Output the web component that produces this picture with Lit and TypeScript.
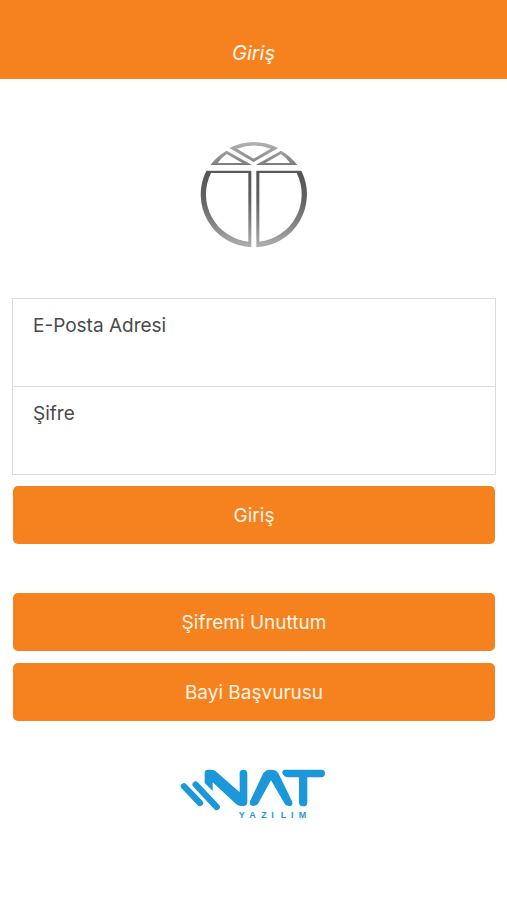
import { LitElement, html, css } from "lit";
import { customElement } from "lit/decorators.js";

@customElement("app-root")
export class AppRoot extends LitElement {
  static styles = css`
    :host {
      display: block;
      min-height: 100vh;
      background: #fff;
      color: #4a4a4a;
      font-family: Inter, "Noto Sans", sans-serif;
      font-size: 19px;
      line-height: 24px;
    }
    .bar {
      box-sizing: border-box;
      height: 79px;
      padding-top: 41px;
      background: #f6821f;
      color: #fff8ee;
      text-align: center;
    }
    .title {
      margin: 0;
      font-size: 20px;
      font-weight: 400;
      font-style: italic;
    }
    .content {
      display: flex;
      flex-direction: column;
      align-items: center;
      padding: 51px 11px 24px 12px;
    }
    svg {
      display: block;
    }
    .form {
      width: 100%;
      margin-top: 38px;
    }
    .fields {
      border: 1px solid #dcdcdc;
    }
    .field {
      display: flex;
      flex-direction: column;
      height: 87px;
      box-sizing: border-box;
      padding: 15px 20px 8px;
    }
    .field + .field {
      border-top: 1px solid #dcdcdc;
      height: 88px;
    }
    .input {
      flex: 1;
      min-height: 0;
      width: 100%;
      padding: 0;
      border: 0;
      outline: 0;
      background: none;
      color: inherit;
      font: inherit;
    }
    .actions {
      display: flex;
      flex-direction: column;
      gap: 12px;
      padding: 11px 1px 0;
    }
    .button {
      width: 100%;
      height: 58px;
      padding: 2px 0 0;
      border: 0;
      border-radius: 5px;
      background: #f6821f;
      color: #fff4e4;
      font: inherit;
      cursor: pointer;
    }
    .secondary {
      margin-top: 37px;
    }
    .vendor {
      margin-top: 34px;
    }
    .vendor-name {
      font: bold 27px "Liberation Sans", sans-serif;
    }
  `;

  render() {
    return html`
      <header class="bar"><h1 class="title">Giriş</h1></header>
      <main class="content">
        <svg width="130" height="130" viewBox="0 0 390 390" role="img" aria-label="Logo">
          <defs>
            <linearGradient id="steel" gradientUnits="userSpaceOnUse" x1="0" y1="34" x2="0" y2="352">
              <stop offset="0" stop-color="#b4b4b4" />
              <stop offset=".2" stop-color="#858585" />
              <stop offset=".3" stop-color="#555" />
              <stop offset=".55" stop-color="#626262" />
              <stop offset=".8" stop-color="#888" />
              <stop offset="1" stop-color="#b0b0b0" />
            </linearGradient>
          </defs>
          <g fill="url(#steel)" fill-rule="evenodd">
            <path d="M52 122H187V352A159 159 0 0 1 52 122ZM66 129A143 143 0 0 0 178 335V129Z" />
            <path d="M337 122H202V352A159 159 0 0 0 337 122ZM323 129A143 143 0 0 1 211 335V129Z" />
            <path d="M64 105A159 159 0 0 1 113 62L189 105ZM86 99H160L113 72Q98 82 86 99Z" />
            <path d="M325 105A159 159 0 0 0 276 62L200 105ZM303 99H229L276 72Q291 82 303 99Z" />
            <path d="M121 54A159 159 0 0 1 268 54L194 96ZM144 56L194 86L245 56A143 143 0 0 0 144 56Z" />
          </g>
        </svg>
        <form class="form" @submit=${(e: Event) => e.preventDefault()}>
          <div class="fields">
            <div class="field">
              <label for="email">E-Posta Adresi</label>
              <input class="input" id="email" type="email" />
            </div>
            <div class="field">
              <label for="password">Şifre</label>
              <input class="input" id="password" type="password" />
            </div>
          </div>
          <div class="actions">
            <button class="button" type="submit">Giriş</button>
            <button class="button secondary" type="button">Şifremi Unuttum</button>
            <button class="button" type="button">Bayi Başvurusu</button>
          </div>
        </form>
        <svg class="vendor" width="170" height="75" viewBox="0 0 510 225" role="img" aria-label="NAT Yazılım">
          <g fill="none" stroke="#1c98da" stroke-width="19" stroke-linecap="round">
            <path d="M45 94L93 144M80 89L143 156" />
          </g>
          <g fill="#1c98da">
            <path d="M107 54Q107 44 117 44H128Q136 44 142 50L212 112V54Q212 44 223 44T235 54V142Q235 153 223 153H216Q208 153 201 147L131 82V108L107 84Z" />
            <path d="M243 139L282 56Q289 44 304 44H308Q322 44 329 56L369 139Q374 153 360 153Q351 153 347 146L306 76L268 145Q264 153 253 153Q239 152 243 139Z" />
            <path d="M348 44H458Q468 44 468 55T458 67H415V143Q415 154 403 154T390 143V67H358Q345 67 340 55Q339 44 348 44Z" />
            <text class="vendor-name" x="209 241 277 307 335 366 389" y="188">YAZILIM</text>
          </g>
        </svg>
      </main>
    `;
  }
}
